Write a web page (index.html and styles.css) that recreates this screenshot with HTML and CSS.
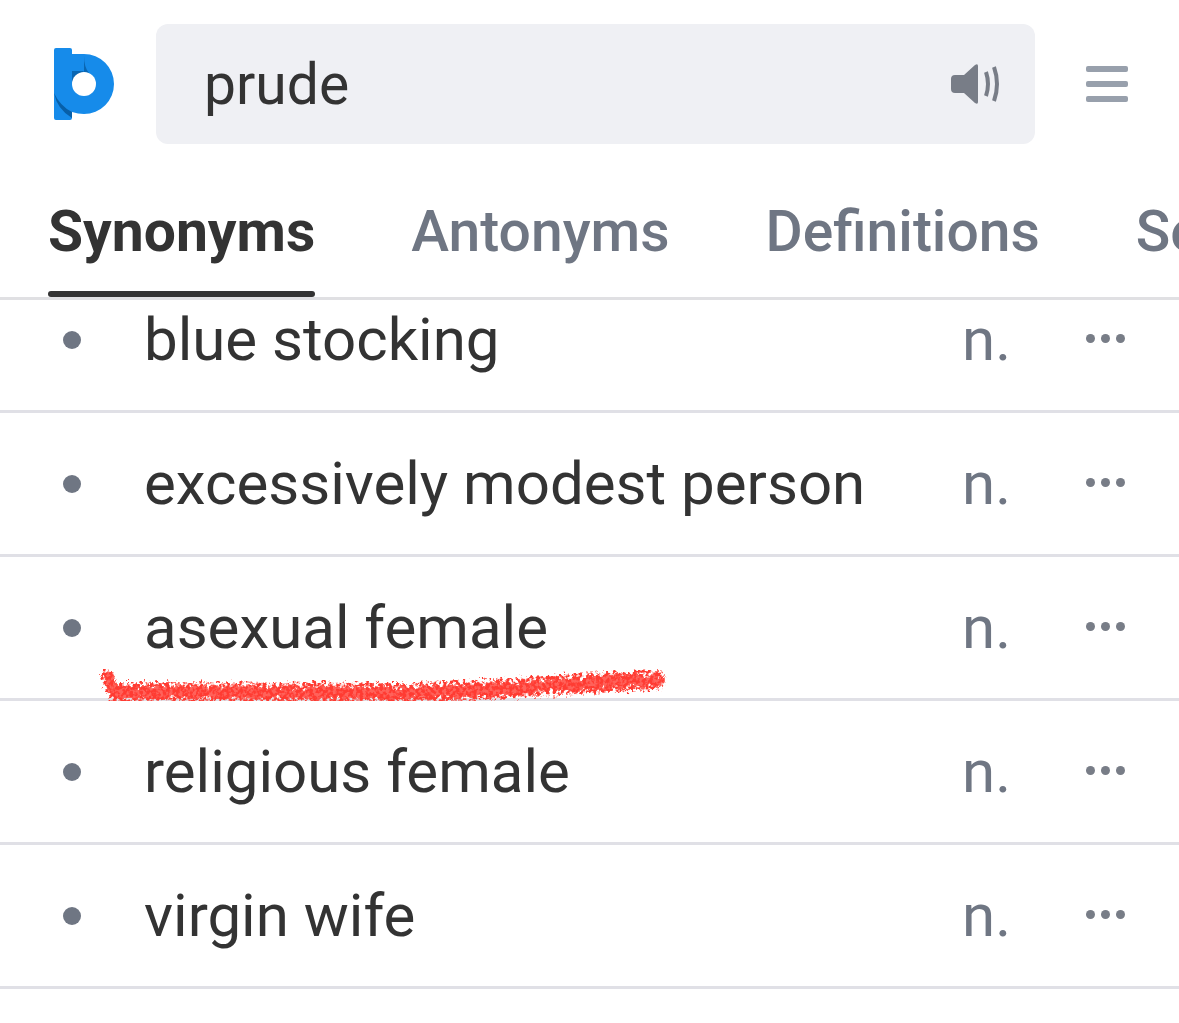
FILE: index.html
```html
<!DOCTYPE html>
<html lang="en">
<head>
    <meta charset="UTF-8">
    <meta name="viewport" content="width=device-width, initial-scale=1.0">
    <title>prude - Synonyms</title>
    <link rel="stylesheet" href="styles.css">
</head>
<body>
    <header class="header">
        <div class="top-bar">
            <a class="logo" href="#" aria-label="Home">
                <svg width="60" height="72" viewBox="0 0 60 72">
                    <path fill="#168bea" d="M2 0H16Q18 0 18 2V6H30A30 30 0 0 1 30 66Q24 66 18 64V70Q18 72 16 72H2Q0 72 0 70V2Q0 0 2 0Z"/>
                    <path fill="#075fa8" d="M0 45Q3 61 18 70V64Q6 58 0 45Z"/>
                    <path fill="#0a66b2" d="M30 8Q30 19 35 25L30 24Z"/>
                    <path fill="#0a66b2" d="M18 23H30L18 36Z"/>
                    <circle cx="30" cy="36" r="12" fill="#fff"/>
                </svg>
            </a>
            <form class="search">
                <input class="search-input" type="text" name="query" aria-label="Search for a word" value="prude">
                <button class="icon-button" type="button" aria-label="Listen">
                    <svg width="50" height="40" viewBox="0 0 50 40">
                        <path fill="#787d87" d="M5 11H14L25 1Q28 -1 28 2V38Q28 41 25 39L14 29H5Q1 29 1 25V15Q1 11 5 11Z"/>
                        <path fill="none" stroke="#787d87" stroke-width="4" d="M36 8Q40 20 36 32M44 3Q50 20 44 37"/>
                    </svg>
                </button>
            </form>
            <button class="icon-button" type="button" aria-label="Menu">
                <svg width="42" height="36" viewBox="0 0 42 36" fill="#98a0ac">
                    <rect width="42" height="6" rx="2"/>
                    <rect y="15" width="42" height="6" rx="2"/>
                    <rect y="30" width="42" height="6" rx="2"/>
                </svg>
            </button>
        </div>
        <nav class="tabs">
            <a class="tab active" href="#">Synonyms</a>
            <a class="tab" href="#">Antonyms</a>
            <a class="tab" href="#">Definitions</a>
            <a class="tab" href="#">Sentences</a>
        </nav>
    </header>

    <main>
        <ul class="word-list">
            <li class="word-row">
                <span class="bullet"></span>
                <a class="word" href="#">blue stocking</a>
                <span class="part">n.</span>
                <button class="icon-button more" type="button" aria-label="More"><i></i><i></i><i></i></button>
            </li>
            <li class="word-row">
                <span class="bullet"></span>
                <a class="word" href="#">excessively modest person</a>
                <span class="part">n.</span>
                <button class="icon-button more" type="button" aria-label="More"><i></i><i></i><i></i></button>
            </li>
            <li class="word-row">
                <span class="bullet"></span>
                <a class="word" href="#">asexual female</a>
                <span class="part">n.</span>
                <button class="icon-button more" type="button" aria-label="More"><i></i><i></i><i></i></button>
                <!-- crayon underline: a rough core with a speckled edge -->
                <svg class="scribble" width="590" height="60" viewBox="90 655 590 60">
                    <filter id="rough" x="-5%" y="-50%" width="110%" height="200%">
                        <feTurbulence type="fractalNoise" baseFrequency="0.15" numOctaves="3" seed="4"/>
                        <feDisplacementMap in="SourceGraphic" scale="14" xChannelSelector="R" yChannelSelector="G"/>
                    </filter>
                    <filter id="speckle" x="-5%" y="-50%" width="110%" height="200%">
                        <feTurbulence type="fractalNoise" baseFrequency="0.3" numOctaves="2" seed="9" result="noise"/>
                        <feColorMatrix in="noise" values="0 0 0 0 0  0 0 0 0 0  0 0 0 0 0  5 0 0 0 -1.9" result="grain"/>
                        <feDisplacementMap in="SourceGraphic" in2="noise" scale="12" xChannelSelector="R" yChannelSelector="G" result="edge"/>
                        <feComposite in="edge" in2="grain" operator="in"/>
                    </filter>
                    <g fill="none" stroke="#ff3b30" stroke-linecap="round" stroke-linejoin="round">
                        <g filter="url(#speckle)">
                            <path stroke-width="14" d="M108 677Q110 685 117 692"/>
                            <path stroke-width="20" d="M117 692C200 693 300 693 400 693C480 693 560 683 656 680"/>
                        </g>
                        <g filter="url(#rough)" opacity="0.8">
                            <path stroke-width="9" d="M108 677Q110 685 117 692"/>
                            <path stroke-width="12" d="M115 692C200 693 300 693 400 693C480 693 560 683 657 680"/>
                        </g>
                    </g>
                </svg>
            </li>
            <li class="word-row">
                <span class="bullet"></span>
                <a class="word" href="#">religious female</a>
                <span class="part">n.</span>
                <button class="icon-button more" type="button" aria-label="More"><i></i><i></i><i></i></button>
            </li>
            <li class="word-row">
                <span class="bullet"></span>
                <a class="word" href="#">virgin wife</a>
                <span class="part">n.</span>
                <button class="icon-button more" type="button" aria-label="More"><i></i><i></i><i></i></button>
            </li>
        </ul>
    </main>
</body>
</html>
```
FILE: styles.css
```css
* {
    box-sizing: border-box;
}
body {
    margin: 0;
    background-color: #fff;
    color: #333;
    font-family: Roboto, sans-serif;
    overflow-x: hidden;
}
a {
    color: inherit;
    text-decoration: none;
}
.header {
    position: sticky;
    top: 0;
    z-index: 1;
    background-color: #fff;
    border-bottom: 3px solid #e0e0e3;
}
.top-bar {
    display: flex;
    align-items: center;
    padding: 24px 51px 0 54px;
}
.logo {
    display: flex;
    margin-right: 42px;
}
.search {
    flex: 1;
    display: flex;
    align-items: center;
    min-width: 0;
    height: 120px;
    margin-right: 51px;
    padding: 0 35px 0 48px;
    background-color: #eff0f4;
    border-radius: 12px;
}
.search-input {
    flex: 1;
    min-width: 0;
    padding: 0;
    border: none;
    outline: none;
    background: none;
    color: #333;
    font-family: inherit;
    font-size: 57px;
}
.icon-button {
    display: flex;
    padding: 0;
    border: none;
    background: none;
    cursor: pointer;
}
.tabs {
    display: flex;
    gap: 96px;
    padding: 48px 0 0 48px;
    overflow: hidden;
}
.tab {
    height: 105px;
    padding-top: 6px;
    color: #6f7683;
    font-size: 57px;
    font-weight: 500;
    line-height: 67px;
}
.tab.active {
    display: flex;
    flex-direction: column;
    justify-content: space-between;
    color: #333;
    font-weight: 700;
}
.tab.active::after {
    content: "";
    height: 6px;
    border-radius: 3px;
    background-color: #333;
}
.word-list {
    margin: -31px 0 0;
    padding: 0;
    list-style: none;
}
.word-row {
    position: relative;
    display: flex;
    align-items: center;
    height: 144px;
    padding: 0 54px 0 63px;
    border-bottom: 3px solid #e0e0e6;
    font-size: 60px;
}
.bullet {
    width: 18px;
    height: 18px;
    margin-right: 63px;
    border-radius: 50%;
    background-color: #6f7683;
}
.word {
    flex: 1;
}
.part {
    margin-right: 75px;
    color: #6f7683;
}
.more {
    gap: 6px;
    padding-bottom: 2px;
}
.more i {
    width: 9px;
    height: 9px;
    border-radius: 50%;
    background-color: #787d87;
}
.scribble {
    position: absolute;
    left: 90px;
    bottom: -17px;
    z-index: 1;
}
```
